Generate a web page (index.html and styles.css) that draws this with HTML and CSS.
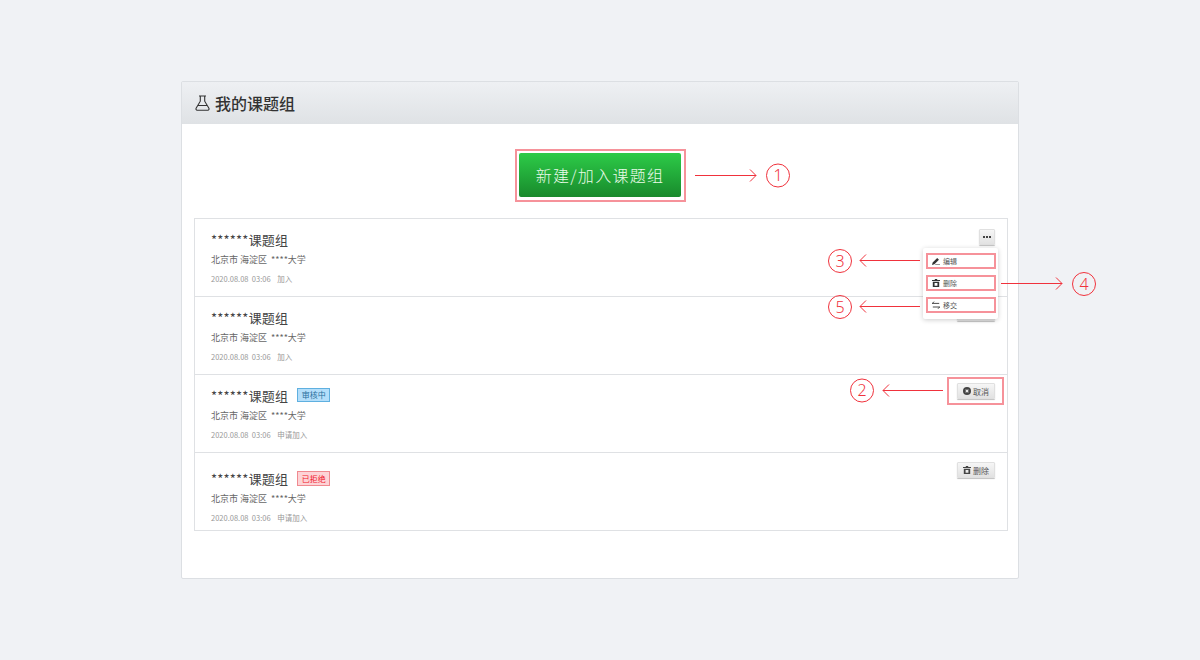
FILE: index.html
```html
<!DOCTYPE html>
<html lang="zh-CN">

<head>
    <meta charset="UTF-8">
    <title>我的课题组</title>
    <link rel="stylesheet" href="styles.css">
</head>

<body>
    <div class="panel">
        <div class="panel-head">
            <svg class="flask" width="15" height="16" viewBox="0 0 15 16" fill="none" stroke="#333" stroke-width="1.1">
                <path d="M4 1h7M5.300 1v5.200L1.100 13.200c-.5.900.1 2 1 2h10.800c.9 0 1.500-1.100 1-2L9.700 6.200V1M3.300 10.500h8.400" />
            </svg>
            <h1>我的课题组</h1>
        </div>
        <div class="panel-body">
            <div class="create-row">
                <a class="btn-create">新建/加入课题组</a>
            </div>
            <div class="group-list">
                <!-- 已加入 -->
                <div class="group">
                    <div class="group-info">
                        <div class="group-name">******课题组</div>
                        <div class="group-place">北京市 海淀区 &nbsp;****大学</div>
                        <div class="group-time">2020.08.08 &nbsp;03:06 &nbsp;&nbsp; 加入</div>
                    </div>
                    <a class="btn btn-more"><i></i><i></i><i></i></a>
                </div>
                <div class="group">
                    <div class="group-info">
                        <div class="group-name">******课题组</div>
                        <div class="group-place">北京市 海淀区 &nbsp;****大学</div>
                        <div class="group-time">2020.08.08 &nbsp;03:06 &nbsp;&nbsp; 加入</div>
                    </div>
                    <a class="btn btn-low">更多</a>
                </div>
                <!-- 申请中 -->
                <div class="group">
                    <div class="group-info">
                        <div class="group-name">******课题组<span class="tag tag-wait">审核中</span></div>
                        <div class="group-place">北京市 海淀区 &nbsp;****大学</div>
                        <div class="group-time">2020.08.08 &nbsp;03:06 &nbsp;&nbsp; 申请加入</div>
                    </div>
                    <a class="btn btn-low">
                        <svg width="8" height="8" viewBox="0 0 10 10">
                            <circle cx="5" cy="5" r="5" fill="#444" />
                            <path d="M3.300 3.300l3.400 3.400M6.700 3.300l-3.400 3.400" stroke="#eee" stroke-width="1.300" />
                        </svg>取消</a>
                </div>
                <!-- 已拒绝 -->
                <div class="group group-last">
                    <div class="group-info">
                        <div class="group-name">******课题组<span class="tag tag-refuse">已拒绝</span></div>
                        <div class="group-place">北京市 海淀区 &nbsp;****大学</div>
                        <div class="group-time">2020.08.08 &nbsp;03:06 &nbsp;&nbsp; 申请加入</div>
                    </div>
                    <a class="btn btn-low">
                        <svg width="8" height="8" viewBox="0 0 10 10" fill="#444">
                            <path d="M3.500 0h3v1.200H10v1.300H0V1.200h3.500zM1 3.300h8V10H1zM3.200 5v3.300h3.600V5z" />
                        </svg>删除</a>
                </div>
            </div>
        </div>
    </div>

    <!-- 操作菜单 -->
    <div class="menu">
        <a class="menu-item">
            <svg width="8" height="8" viewBox="0 0 10 10" fill="#333">
                <path d="M0 10l.8-3L6.500 1.300l2.200 2.200L3 9.200zM4 9.300h6v.7H4z" />
            </svg>编辑</a>
        <a class="menu-item">
            <svg width="8" height="8" viewBox="0 0 10 10" fill="#333">
                <path d="M3.500 0h3v1.200H10v1.300H0V1.200h3.500zM1 3.300h8V10H1zM3.200 5v3.300h3.600V5z" />
            </svg>删除</a>
        <a class="menu-item">
            <svg width="8" height="8" viewBox="0 0 10 10" fill="none" stroke="#333" stroke-width="1.100">
                <path d="M0 3h9M2.500 .8L.5 3M10 7.500H1M7.500 9.700l2-2.200" />
            </svg>移交</a>
    </div>

    <!-- 标注 -->
    <svg class="notes" width="1200" height="660" viewBox="0 0 1200 660" fill="none" stroke="#f0323c">
        <path d="M695 175.500h61M750 169.500l6 6-6 6" />
        <circle cx="778" cy="175.500" r="11.500" />
        <path d="M943 390.500h-60M889 384.500l-6 6 6 6" />
        <circle cx="862" cy="390.500" r="11.500" />
        <path d="M920 260.500h-60M866 254.500l-6 6 6 6" />
        <circle cx="840" cy="261" r="11.500" />
        <path d="M1001 283.500h61M1056 277.500l6 6-6 6" />
        <circle cx="1084" cy="284" r="11.500" />
        <path d="M920 306.500h-60M866 300.500l-6 6 6 6" />
        <circle cx="840" cy="307" r="11.500" />
        <g class="note-num" fill="#f0323c" stroke="none" text-anchor="middle">
            <text x="778" y="181">1</text>
            <text x="862" y="396">2</text>
            <text x="840" y="266.500">3</text>
            <text x="1084" y="289.500">4</text>
            <text x="840" y="312.500">5</text>
        </g>
    </svg>
    <div class="mark mark-create"></div>
    <div class="mark mark-cancel"></div>
</body>

</html>
```

FILE: styles.css
```css
/* 基本样式 */

* {
    box-sizing: border-box;
}

body {
    margin: 0;
    height: 660px;
    padding-top: 81px;
    overflow: hidden;
    background: #f0f2f5;
    color: #333;
    font-family: "Noto Sans CJK SC", "Noto Sans", sans-serif;
}

.panel {
    width: 838px;
    height: 498px;
    margin-left: 181px;
    background: #fff;
    border: 1px solid #dcdfe3;
    border-radius: 2px;
}

.panel-head {
    display: flex;
    align-items: center;
    gap: 5px;
    height: 42px;
    padding: 0 0 1px 13px;
    background: linear-gradient(#eef0f3, #dfe2e5);
}

.panel-head h1 {
    margin: 0;
    font-size: 16px;
    font-weight: 500;
    color: #333;
}

.panel-body {
    padding: 0 12px;
}

/******************** 新建按钮 ***********************/

.create-row {
    display: flex;
    justify-content: center;
    height: 94px;
    padding-top: 29px;
}

.btn-create {
    display: block;
    width: 162px;
    height: 44px;
    line-height: 44px;
    text-align: center;
    color: #eafbe9;
    font-size: 16px;
    font-weight: 300;
    letter-spacing: 1.3px;
    background: linear-gradient(#2dcb48, #188a2c);
    border-radius: 2px;
}

/******************** 列表 ***********************/

.group-list {
    width: 814px;
    height: 313px;
    border: 1px solid #dfe1e4;
}

.group {
    display: flex;
    justify-content: space-between;
    align-items: flex-start;
    height: 78px;
    padding: 8px 12px 0 16px;
    border-bottom: 1px solid #dfe1e4;
}

.group:first-child .btn {
    margin-top: 2px;
}

.group-last {
    border-bottom: 0;
    height: 77px;
}

.group-last .btn {
    margin-top: 1px;
}

.group-info {
    padding-top: 2px;
}

.group-last .group-info {
    padding-top: 7px;
}

.group-name {
    display: flex;
    align-items: center;
    height: 20px;
    font-size: 13px;
    letter-spacing: .2px;
    color: #444;
}

.group-place {
    margin-top: 4px;
    height: 14px;
    line-height: 14px;
    font-size: 9px;
    color: #666;
}

.group-time {
    margin-top: 6px;
    height: 12px;
    line-height: 12px;
    font-size: 7.5px;
    color: #999;
}

.tag {
    width: 33px;
    height: 14px;
    margin-left: 9px;
    line-height: 12px;
    text-align: center;
    font-size: 8px;
    letter-spacing: 0;
    border: 1px solid;
}

.tag-wait {
    color: #2a6f9e;
    background: #b4defa;
    border-color: #5fb0e0;
}

.tag-refuse {
    height: 15px;
    line-height: 13px;
    color: #f0202c;
    background: #fdd3d6;
    border-color: #f08a90;
}

/******************** 按钮 ***********************/

.btn {
    display: flex;
    align-items: center;
    justify-content: center;
    gap: 2px;
    height: 16px;
    font-size: 8px;
    color: #555;
    background: linear-gradient(#f6f6f6, #e2e2e2);
    border: 1px solid #e0e0e0;
    border-radius: 1px;
    box-shadow: 0 1px 1px rgba(0, 0, 0, .25);
}

.btn-low {
    width: 38px;
}

.btn-more {
    width: 16px;
    gap: 1px;
}

.btn-more i {
    width: 2px;
    height: 2px;
    background: #444;
}

/******************** 浮层 ***********************/

.menu {
    position: absolute;
    left: 923px;
    top: 248px;
    width: 75px;
    height: 71px;
    padding: 5px 2px 0 3px;
    background: #fff;
    border-radius: 2px;
    box-shadow: 0 1px 5px rgba(0, 0, 0, .2);
}

.menu-item {
    display: flex;
    align-items: center;
    gap: 3px;
    height: 16px;
    margin-bottom: 6px;
    padding: 0 0 1px 4px;
    font-size: 7px;
    color: #555;
    border: 2px solid #f6929a;
}

.notes {
    position: absolute;
    left: 0;
    top: 0;
}

.note-num {
    font-family: "Noto Sans", sans-serif;
    font-size: 16px;
    font-weight: 300;
}

.mark {
    position: absolute;
    border: 2px solid #f6929a;
}

.mark-create {
    left: 515px;
    top: 149px;
    width: 171px;
    height: 53px;
}

.mark-cancel {
    left: 947px;
    top: 377px;
    width: 57px;
    height: 28px;
}
```
